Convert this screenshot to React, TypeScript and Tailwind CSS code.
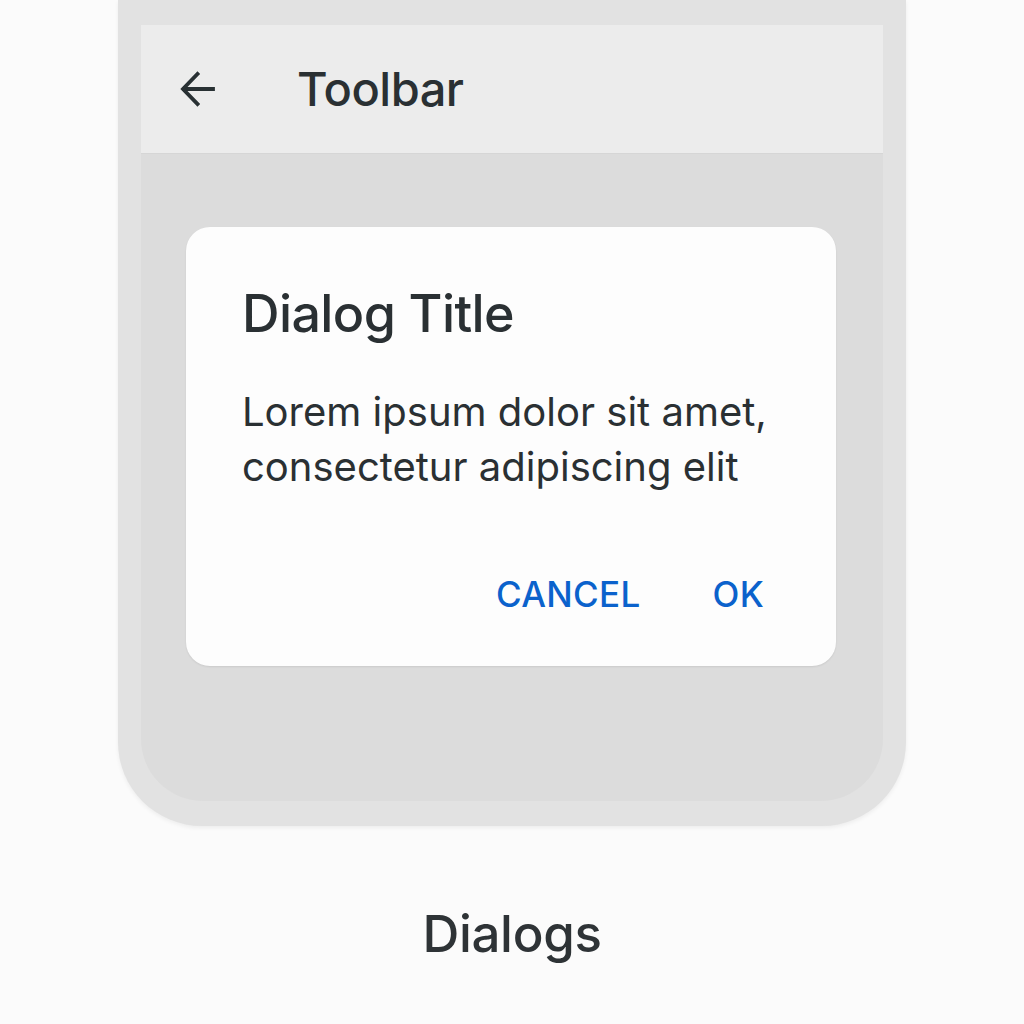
import React from "react";

export default function App() {
  return (
    <div className="w-[1024px] h-[1024px] bg-[#fbfbfb] overflow-hidden flex flex-col items-center" style={{ fontFamily: "Inter, 'Noto Sans', sans-serif" }}>
      <div className="w-[788px] h-[826px] bg-[#e2e2e2] rounded-b-[84px] px-[23px] pt-[25px] pb-[25px] shadow-[0_2px_4px_rgba(0,0,0,0.06)] shrink-0">
        <div className="h-full bg-[#dcdcdc] rounded-b-[62px] flex flex-col overflow-hidden">
          <div className="h-[129px] bg-[#ececec] border-b border-[#d6d6d6] flex items-center shrink-0">
            <div className="w-[156px] flex justify-start pl-[39px]">
              <svg width="36" height="38" viewBox="0 0 36 38" fill="none" stroke="#283033" strokeWidth="3.8" strokeLinecap="square" strokeLinejoin="miter">
                <path d="M4 19H33" />
                <path d="M17.5 4L3 19L17.5 34" />
              </svg>
            </div>
            <span className="text-[47px] text-[#2a3033] tracking-[-0.5px] font-[450]">Toolbar</span>
          </div>
          <div className="pt-[73px] pl-[45px] pr-[47px]">
            <div className="h-[439px] bg-[#fdfdfd] rounded-[24px] shadow-[0_1px_2px_rgba(0,0,0,0.08)] flex flex-col pl-[56px] pr-[56px]">
              <div className="pt-[57px] text-[52px] leading-[60px] text-[#2a3033] tracking-[-0.6px] font-medium">Dialog Title</div>
              <div className="pt-[40px] text-[40px] leading-[55px] text-[#2a3033] whitespace-nowrap">
                Lorem ipsum dolor sit amet,
                <br />
                consectetur adipiscing elit
              </div>
              <div className="flex justify-end gap-[72px] mt-auto mb-[46px] mr-[16px] text-[35px] text-[#0b62cc] font-medium tracking-[0.3px]">
                <span>CANCEL</span>
                <span>OK</span>
              </div>
            </div>
          </div>
        </div>
      </div>
      <div className="mt-[70px] text-[51px] text-[#2e3336] tracking-[-0.3px] font-[450]">Dialogs</div>
    </div>
  );
}
